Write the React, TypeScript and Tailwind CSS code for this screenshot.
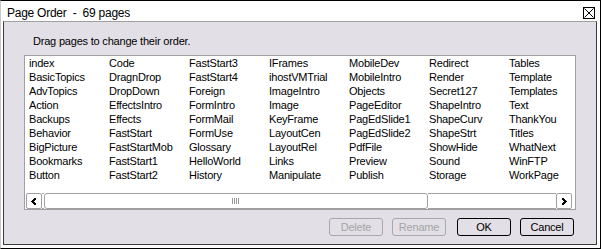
import React from "react";

const columns: string[][] = [
  ["index", "BasicTopics", "AdvTopics", "Action", "Backups", "Behavior", "BigPicture", "Bookmarks", "Button"],
  ["Code", "DragnDrop", "DropDown", "EffectsIntro", "Effects", "FastStart", "FastStartMob", "FastStart1", "FastStart2"],
  ["FastStart3", "FastStart4", "Foreign", "FormIntro", "FormMail", "FormUse", "Glossary", "HelloWorld", "History"],
  ["IFrames", "ihostVMTrial", "ImageIntro", "Image", "KeyFrame", "LayoutCen", "LayoutRel", "Links", "Manipulate"],
  ["MobileDev", "MobileIntro", "Objects", "PageEditor", "PagEdSlide1", "PagEdSlide2", "PdfFile", "Preview", "Publish"],
  ["Redirect", "Render", "Secret127", "ShapeIntro", "ShapeCurv", "ShapeStrt", "ShowHide", "Sound", "Storage"],
  ["Tables", "Template", "Templates", "Text", "ThankYou", "Titles", "WhatNext", "WinFTP", "WorkPage"],
];

function Chevron({ dir }: { dir: "left" | "right" }) {
  return (
    <svg width="8" height="9" viewBox="0 0 8 9" shapeRendering="crispEdges">
      {dir === "left" ? (
        <polyline points="5.5,1 2.5,4.5 5.5,8" fill="none" stroke="#000" strokeWidth="2" />
      ) : (
        <polyline points="2.5,1 5.5,4.5 2.5,8" fill="none" stroke="#000" strokeWidth="2" />
      )}
    </svg>
  );
}

function DlgButton({ label, disabled }: { label: string; disabled?: boolean }) {
  return (
    <div
      className={
        disabled
          ? "w-[54px] h-[18px] rounded-[3px] border border-[#a8a8a8] bg-[#e3dfe6] text-[#a4a4a4] flex items-center justify-center text-[11px] tracking-[-0.2px] leading-none"
          : "w-[54px] h-[18px] rounded-[3px] border border-black border-r-[1.5px] border-b-[1.5px] bg-[#e3dfe6] text-black flex items-center justify-center text-[11px] tracking-[-0.2px] leading-none"
      }
    >
      {label}
    </div>
  );
}

export default function App() {
  return (
    <div className="w-[601px] h-[249px] bg-white border border-black border-l-[#c8c8c8] pl-[2px] pr-[3px] pb-[3px] flex flex-col font-['Liberation_Sans',Arial,sans-serif] text-black select-none">
      {/* Title bar */}
      <div className="h-[20px] flex items-start justify-between shrink-0">
        <span className="pl-[4px] text-[12px] tracking-[-0.25px] leading-[24px] whitespace-pre">
          {"Page Order  -  69 pages"}
        </span>
        <div className="mt-[6px] mr-[2px] w-[12px] h-[12px] border border-black flex items-center justify-center">
          <svg width="10" height="10" viewBox="0 0 10 10">
            <line x1="0.5" y1="0.5" x2="9.5" y2="9.5" stroke="#000" strokeWidth="1" />
            <line x1="9.5" y1="0.5" x2="0.5" y2="9.5" stroke="#000" strokeWidth="1" />
          </svg>
        </div>
      </div>

      {/* Client area */}
      <div className="flex-1 bg-[#e3dfe6] border border-[#3c3c3c] border-t-[#a0a0a0] flex flex-col px-[20px]">
        <div className="mt-[12px] ml-[9px] text-[11px] tracking-[-0.2px] leading-[14px]">
          Drag pages to change their order.
        </div>

        {/* List box */}
        <div className="mt-[7px] h-[155px] bg-white border border-[#a0a0a0] flex flex-col overflow-hidden">
          <div className="flex pl-[4px] text-[11px] tracking-[-0.2px] leading-[14px] overflow-hidden">
            {columns.map((col, i) => (
              <div key={i} className="w-[80px] shrink-0 flex flex-col whitespace-nowrap">
                {col.map((name) => (
                  <div key={name} className="h-[14px]">
                    {name}
                  </div>
                ))}
              </div>
            ))}
          </div>

          {/* Horizontal scrollbar */}
          <div className="mt-auto h-[16px] flex pl-[1px] pr-[3px]">
            <div className="w-[16px] h-full border border-[#a0a0a0] rounded-[2px] flex items-center justify-center">
              <Chevron dir="left" />
            </div>
            <div className="w-[2px] h-full border-y border-[#a0a0a0]" />
            <div className="w-[384px] h-full border border-[#a0a0a0] rounded-[3px] flex items-center justify-center">
              <svg width="8" height="6" viewBox="0 0 8 6" shapeRendering="crispEdges">
                <rect x="0" y="0" width="1" height="6" fill="#9a9a9a" />
                <rect x="2" y="0" width="1" height="6" fill="#9a9a9a" />
                <rect x="4" y="0" width="1" height="6" fill="#9a9a9a" />
                <rect x="6" y="0" width="1" height="6" fill="#9a9a9a" />
              </svg>
            </div>
            <div className="flex-1 h-full border-y border-[#a0a0a0]" />
            <div className="w-[16px] h-full border border-[#a0a0a0] rounded-[2px] flex items-center justify-center">
              <Chevron dir="right" />
            </div>
          </div>
        </div>

        {/* Buttons */}
        <div className="mt-[8px] flex justify-end pr-[2px]">
          <DlgButton label="Delete" disabled />
          <div className="w-[9px]" />
          <DlgButton label="Rename" disabled />
          <div className="w-[11px]" />
          <DlgButton label="OK" />
          <div className="w-[9px]" />
          <DlgButton label="Cancel" />
        </div>
      </div>
    </div>
  );
}
